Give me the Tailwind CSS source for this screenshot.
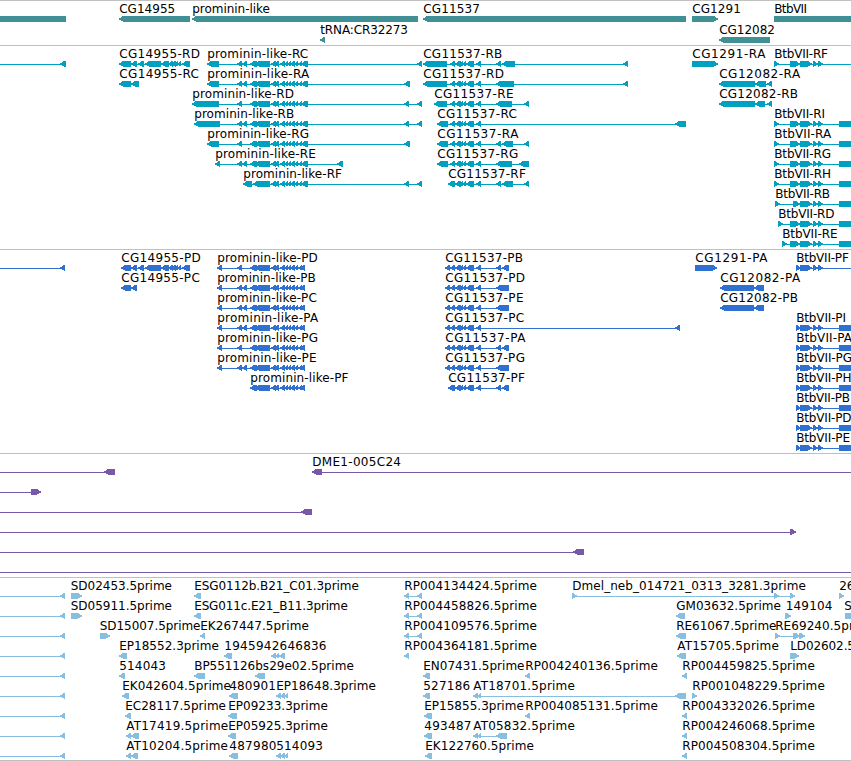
<!DOCTYPE html>
<html lang="en">
<head>
    <meta charset="UTF-8">
    <meta name="viewport" content="width=device-width, initial-scale=1.0">
    <title>Genome Region</title>
    <script src="https://cdn.jsdelivr.net/npm/@tailwindcss/browser@4"></script>
</head>
<body class="bg-white overflow-hidden font-['DejaVu_Sans',sans-serif] text-xs text-black">
    <main class="w-[851px] h-[761px] overflow-hidden flex flex-col border-b border-[#c0c0c0]">
        <section id="genes" class="shrink-0 border-t border-[#c0c0c0] pb-[2px] text-[#409095]"></section>
        <section id="transcripts" class="shrink-0 border-t border-[#c0c0c0] pb-[3px] text-[#00a0c0]"></section>
        <section id="proteins" class="shrink-0 border-t border-[#c0c0c0] pb-[3px] text-[#3070d0]"></section>
        <section id="clones" class="shrink-0 border-t border-[#c0c0c0] pb-[3px] text-[#7858a8]"></section>
        <section id="ests" class="shrink-0 border-t border-[#c0c0c0] pb-[2px] text-[#88bee0]"></section>
    </main>

    <script>
        // One feature: [label, right edge of label (0 = natural width), strand, exons, label offset]
        const L = (exons, label = "", end = 0, shift = 0) => [label, end, "<", exons, shift];
        const R = (exons, label = "", end = 0, shift = 0) => [label, end, ">", exons, shift];

        // Arrow head is stepped on whole pixels: 2px tip, 4px neck, then the full 6px bar
        function exonPath(a, b, strand) {
            if (strand === "<") return `M${a} 17H${a + 2}V16H${a + 3}V15H${b}V21H${a + 4}V20H${a + 2}V19H${a}Z`;
            return `M${b} 17H${b - 2}V16H${b - 3}V15H${a}V21H${b - 4}V20H${b - 2}V19H${b}Z`;
        }

        function drawTrack(id, rows, rowClass) {
            let html = "";
            for (const row of rows) {
                html += `<svg class="block w-full overflow-visible ${rowClass}" shape-rendering="crispEdges" fill="currentColor">`;
                for (const [label, end, strand, exons, shift] of row) {
                    const start = exons[0][0];
                    const stop = exons[exons.length - 1][1];
                    html += `<rect x="${start + 1}" y="18" width="${stop - start - 2}" height="1"/>`;
                    html += `<path d="${exons.map(e => exonPath(e[0], e[1], strand)).join("")}"/>`;
                    if (label) {
                        const x = start + 0.2 + shift;
                        const fit = end ? `textLength="${(end + 0.5 - x).toFixed(1)}"` : "";
                        html += `<text class="fill-black" x="${x}" y="12" ${fit}>${label}</text>`;
                    }
                }
                html += "</svg>";
            }
            document.getElementById(id).innerHTML = html;
        }

        drawTrack("genes", [
            [
                L([[-10, 66]]),
                L([[119, 190]], "CG14955", 174.7),
                L([[192, 418]], "prominin-like", 269.5),
                L([[423, 686]], "CG11537", 479.5),
                R([[692, 718]], "CG1291", 740.5),
                R([[774, 870]], "BtbVII", 806.5),
            ],
            [
                L([[320, 325]], "tRNA:CR32273", 407.5),
                L([[719, 770]], "CG12082", 774.5),
            ],
        ], "h-[21px]");

        // Exons shared by the isoforms of a gene
        const cgTail = [[131, 137], [138, 144], [145, 161], [161, 169], [168, 173], [171, 176], [174, 178], [177, 181], [182, 190]];
        const promMid = [[255, 270], [271, 276], [274, 279], [280, 285], [284, 288], [287, 291], [290, 295], [294, 298], [298, 302]];
        const promR = [[250, 257], ...promMid, [301, 308]];
        const promP = [[250, 257], ...promMid, [300, 305]];
        const one = [[237, 242]];
        const two = [[237, 242], [242, 247]];
        const far = [[404, 409], [417, 422]];
        const c5 = [[455, 461], [459, 463], [462, 466], [466, 474], [476, 481]];
        const c6 = [[450, 455], ...c5];
        const btb = [[800, 812], [813, 818], [818, 823]];
        const btbFull = [...btb, [839, 870]];
        const btbR = [[790, 800], ...btbFull];

        drawTrack("transcripts", [
            [
                L([[-10, 0], [60, 66]]),
                L([[119, 131], ...cgTail], "CG14955-RD", 199.5),
                L([[207, 219], ...two, ...promR, [417, 422]], "prominin-like-RC", 307.7),
                L([[423, 447], ...c6, [496, 501], [502, 515], [623, 628]], "CG11537-RB", 501.7),
                R([[692, 718]], "CG1291-RA", 765),
                R([[774, 779], [790, 800], ...btb, [860, 870]], "BtbVII-RF", 827.5),
            ],
            [
                L([[119, 131], [131, 139]], "CG14955-RC", 198.5),
                L([[207, 219], ...two, ...promR, [404, 410]], "prominin-like-RA", 308.7),
                L([[423, 447], ...c6, [496, 514], [623, 628]], "CG11537-RD", 503.5),
                L([[719, 755], [755, 766], [767, 772]], "CG12082-RA", 799.7),
            ],
            [
                L([[192, 219], ...one, ...promR, ...far], "prominin-like-RD", 293.5),
                L([[434, 447], ...c6, [496, 512], [524, 529]], "CG11537-RE", 513),
                L([[719, 755], [755, 765], [767, 772]], "CG12082-RB", 797.5),
            ],
            [
                L([[194, 220], ...two, ...promR, ...far], "prominin-like-RB", 293.7),
                L([[437, 448], ...c6, [675, 686]], "CG11537-RC", 516.5),
                R([[774, 779], ...btbR], "BtbVII-RI", 824.5),
            ],
            [
                L([[207, 219], ...one, ...promR, [404, 410]], "prominin-like-RG", 308.5),
                L([[437, 448], ...c6, [496, 501], [502, 513], [524, 529]], "CG11537-RA", 518),
                R([[774, 779], ...btbR], "BtbVII-RA", 830.7),
            ],
            [
                L([[215, 220], ...two, ...promR, [337, 343]], "prominin-like-RE", 315.3),
                L([[437, 448], ...c6, [496, 512], [519, 529]], "CG11537-RG", 517.7),
                R([[774, 779], ...btbR], "BtbVII-RG", 830.5),
            ],
            [
                L([[243, 252], ...promR.map((e, i) => i ? e : [253, 260]), ...far], "prominin-like-RF", 341.5),
                L([[448, 455], ...c5, [496, 501], [502, 513], [524, 529]], "CG11537-RF", 525.3),
                R([[774, 779], ...btbR], "BtbVII-RH", 830.5),
            ],
            [R([[775, 780], [793, 800], ...btbFull], "BtbVII-RB", 829.5)],
            [R([[778, 783], ...btbR], "BtbVII-RD", 834)],
            [R([[782, 787], ...btbR], "BtbVII-RE", 837)],
        ], "h-5");

        const cgP = [[445, 450], ...c6];
        const btbP = [[796, 801], ...btbFull];

        drawTrack("proteins", [
            [
                L([[-10, 0], [60, 65]]),
                L([[121, 131], ...cgTail], "CG14955-PD", 200.3),
                L([[217, 222], ...one, ...promP], "prominin-like-PD", 317.3),
                L([...cgP, [496, 501], [502, 509]], "CG11537-PB", 522.5),
                R([[695, 717]], "CG1291-PA", 767),
                R([[796, 801], ...btb, [860, 870]], "BtbVII-PF", 848.3),
            ],
            [
                L([[121, 131], [131, 137]], "CG14955-PC", 199.3),
                L([[217, 222], ...two, ...promP], "prominin-like-PB", 315.3),
                L([...cgP, [496, 509]], "CG11537-PD", 524.5),
                L([[720, 754], [754, 764]], "CG12082-PA", 799.7),
            ],
            [
                L([[217, 222], ...two, ...promP], "prominin-like-PC", 316.3),
                L([...cgP, [496, 509]], "CG11537-PE", 523),
                L([[720, 754], [754, 764]], "CG12082-PB", 797.5),
            ],
            [
                L([[217, 222], ...two, ...promP], "prominin-like-PA", 317.7),
                L([...cgP, [675, 680]], "CG11537-PC", 523.7),
                R(btbP, "BtbVII-PI", 845.5),
            ],
            [
                L([[217, 222], ...one, ...promP], "prominin-like-PG", 317.5),
                L([...cgP, [496, 501], [502, 509]], "CG11537-PA", 525),
                R(btbP, "BtbVII-PA", 851.5),
            ],
            [
                L([[217, 222], ...two, ...promP], "prominin-like-PE", 316),
                L([...cgP, [496, 509]], "CG11537-PG", 524.5),
                R(btbP, "BtbVII-PG", 851.5),
            ],
            [
                L(promP, "prominin-like-PF", 348),
                L([[448, 455], ...c5, [496, 501], [502, 509]], "CG11537-PF", 524.5),
                R(btbP, "BtbVII-PH", 851),
            ],
            [R(btbP, "BtbVII-PB", 849.5)],
            [R(btbP, "BtbVII-PD", 851)],
            [R(btbP, "BtbVII-PE", 849.5)],
        ], "h-5");

        drawTrack("clones", [
            [L([[-10, 0], [104, 115]]), L([[312, 322], [860, 870]], "DME1-005C24", 400.5)],
            [R([[-10, 0], [31, 41]])],
            [L([[-10, 0], [301, 312]])],
            [R([[-10, 0], [790, 796]])],
            [L([[-10, 0], [573, 584]])],
            [L([[-10, 0], [860, 870]])],
        ], "h-5");

        const edge = L([[-10, 0], [60, 65]]);
        const trio = [[276, 281], [280, 285], [284, 288]];

        drawTrack("ests", [
            [
                edge,
                R([[71, 82]], "SD02453.5prime", 171.5, -0.5),
                L([[194, 201]], "ESG0112b.B21_C01.3prime", 358.3),
                L(far, "RP004134424.5prime", 536.5),
                R([[572, 577], [774, 779], [790, 795]], "Dmel_neb_014721_0313_3281.3prime", 805.3),
                R([[839, 844]], "26"),
            ],
            [
                edge,
                R([[71, 82]], "SD05911.5prime", 171.5, -0.5),
                L([[194, 201]], "ESG011c.E21_B11.3prime", 347.3),
                L(far, "RP004458826.5prime", 536.5),
                L([[676, 685]], "GM03632.5prime", 780.5),
                R([[785, 791]], "149104", 832, 0.5),
                R([[845, 870]], "S", 0, -1),
            ],
            [
                edge,
                R([[100, 110]], "SD15007.5prime", 200, -0.5),
                L([[200, 205]], "EK267447.5prime", 308.3),
                L(far, "RP004109576.5prime", 536.5),
                L([[676, 686]], "RE61067.5prime", 776),
                R([[775, 780], [793, 800], [799, 805]], "RE69240.5prime", 876),
            ],
            [
                edge,
                L([[119, 127]], "EP18552.3prime", 218.3),
                L([[224, 232]], "194594", 271),
                L([[271, 276], [275, 279], [279, 285]], "2646836", 326, 0.5),
                L([[404, 409]], "RP004364181.5prime", 536.5),
                L([[677, 686]], "AT15705.5prime", 778.3),
                R([[790, 799]], "LD02602.5prime", 889),
            ],
            [
                edge,
                L([[119, 125]], "514043", 165.5),
                L([[194, 205]], "BP551126", 254.7),
                L([[255, 265]], "bs29e02.5prime", 353.3),
                L([[423, 430]], "EN07431.5prime", 524),
                L([[525, 530]], "RP004240136.5prime", 657.5),
                L([[682, 687]], "RP004459825.5prime", 814.3),
            ],
            [
                edge,
                L([[122, 129]], "EK042604.5prime", 230.5),
                L([[229, 238]], "480901", 275.5),
                L(trio, "EP18648.3prime", 375.3),
                L([[423, 430]], "527186", 469.7),
                L([[473, 478], [477, 481], [675, 686]], "AT18701.5prime", 574.3),
                R([[692, 697]], "RP001048229.5prime", 824.3),
            ],
            [
                edge,
                L([[125, 131]], "EC28117.5prime", 225.5),
                L([[228, 237]], "EP09233.3prime", 327.3),
                L([[424, 432]], "EP15855.3prime", 523.3),
                L([[525, 530]], "RP004085131.5prime", 657.5),
                L([[682, 687]], "RP004332026.5prime", 814.3),
            ],
            [
                edge,
                L([[126, 131], [131, 139]], "AT17419.5prime", 227.7),
                L([[228, 236]], "EP05925.3prime", 327.3),
                L([[424, 432]], "493487", 471),
                L([[473, 478], [477, 481], [496, 507]], "AT05832.5prime", 574.3),
                L([[682, 687]], "RP004246068.5prime", 814.3),
            ],
            [
                edge,
                L([[126, 131], [131, 138]], "AT10204.5prime", 227.5),
                L([[229, 238]], "487980", 276),
                L(trio, "514093", 322.5),
                L([[425, 432]], "EK122760.5prime", 533.3),
                L([[682, 687]], "RP004508304.5prime", 814.3),
            ],
        ], "h-5");
    </script>
</body>
</html>
